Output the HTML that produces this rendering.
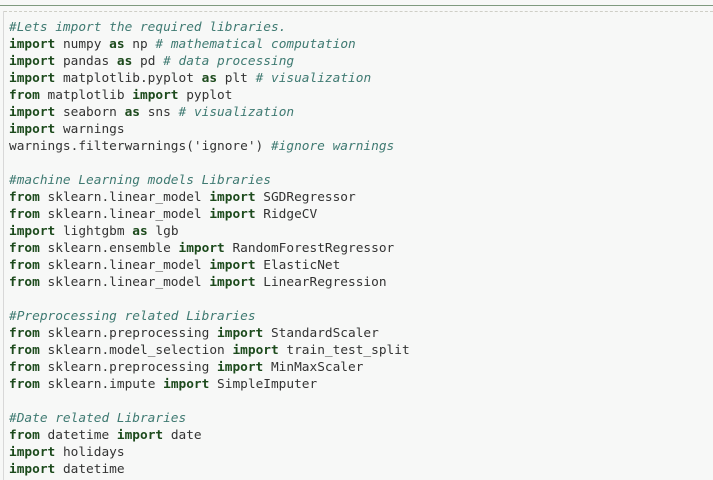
<!DOCTYPE html><html><head><style>
body{margin:0;width:713px;height:480px;overflow:hidden;background:#f7f8f7;position:relative}
.top{position:absolute;left:0;top:5px;width:713px;height:1px;background:#7f9a7f}
.dash{position:absolute;left:4px;top:11px;width:709px;border-top:1px dashed #cfcfc7}
.lb{position:absolute;left:3px;top:11px;width:1px;height:469px;background:#d8d8d8}
pre{position:absolute;left:9px;top:19px;margin:0;font-family:"DejaVu Sans Mono","Liberation Mono",monospace;font-size:12.8px;line-height:17px;color:#333}
b{color:#1c4a1c;font-weight:bold}
i{color:#3f7a72;font-style:italic}
</style></head><body><div class="top"></div><div class="dash"></div><div class="lb"></div>
<pre><i>#Lets import the required libraries.</i>
<b>import</b> numpy <b>as</b> np <i># mathematical computation</i>
<b>import</b> pandas <b>as</b> pd <i># data processing</i>
<b>import</b> matplotlib.pyplot <b>as</b> plt <i># visualization</i>
<b>from</b> matplotlib <b>import</b> pyplot
<b>import</b> seaborn <b>as</b> sns <i># visualization</i>
<b>import</b> warnings
warnings.filterwarnings('ignore') <i>#ignore warnings</i>

<i>#machine Learning models Libraries</i>
<b>from</b> sklearn.linear_model <b>import</b> SGDRegressor
<b>from</b> sklearn.linear_model <b>import</b> RidgeCV
<b>import</b> lightgbm <b>as</b> lgb
<b>from</b> sklearn.ensemble <b>import</b> RandomForestRegressor
<b>from</b> sklearn.linear_model <b>import</b> ElasticNet
<b>from</b> sklearn.linear_model <b>import</b> LinearRegression

<i>#Preprocessing related Libraries</i>
<b>from</b> sklearn.preprocessing <b>import</b> StandardScaler
<b>from</b> sklearn.model_selection <b>import</b> train_test_split
<b>from</b> sklearn.preprocessing <b>import</b> MinMaxScaler
<b>from</b> sklearn.impute <b>import</b> SimpleImputer

<i>#Date related Libraries</i>
<b>from</b> datetime <b>import</b> date
<b>import</b> holidays
<b>import</b> datetime</pre>
</body></html>
